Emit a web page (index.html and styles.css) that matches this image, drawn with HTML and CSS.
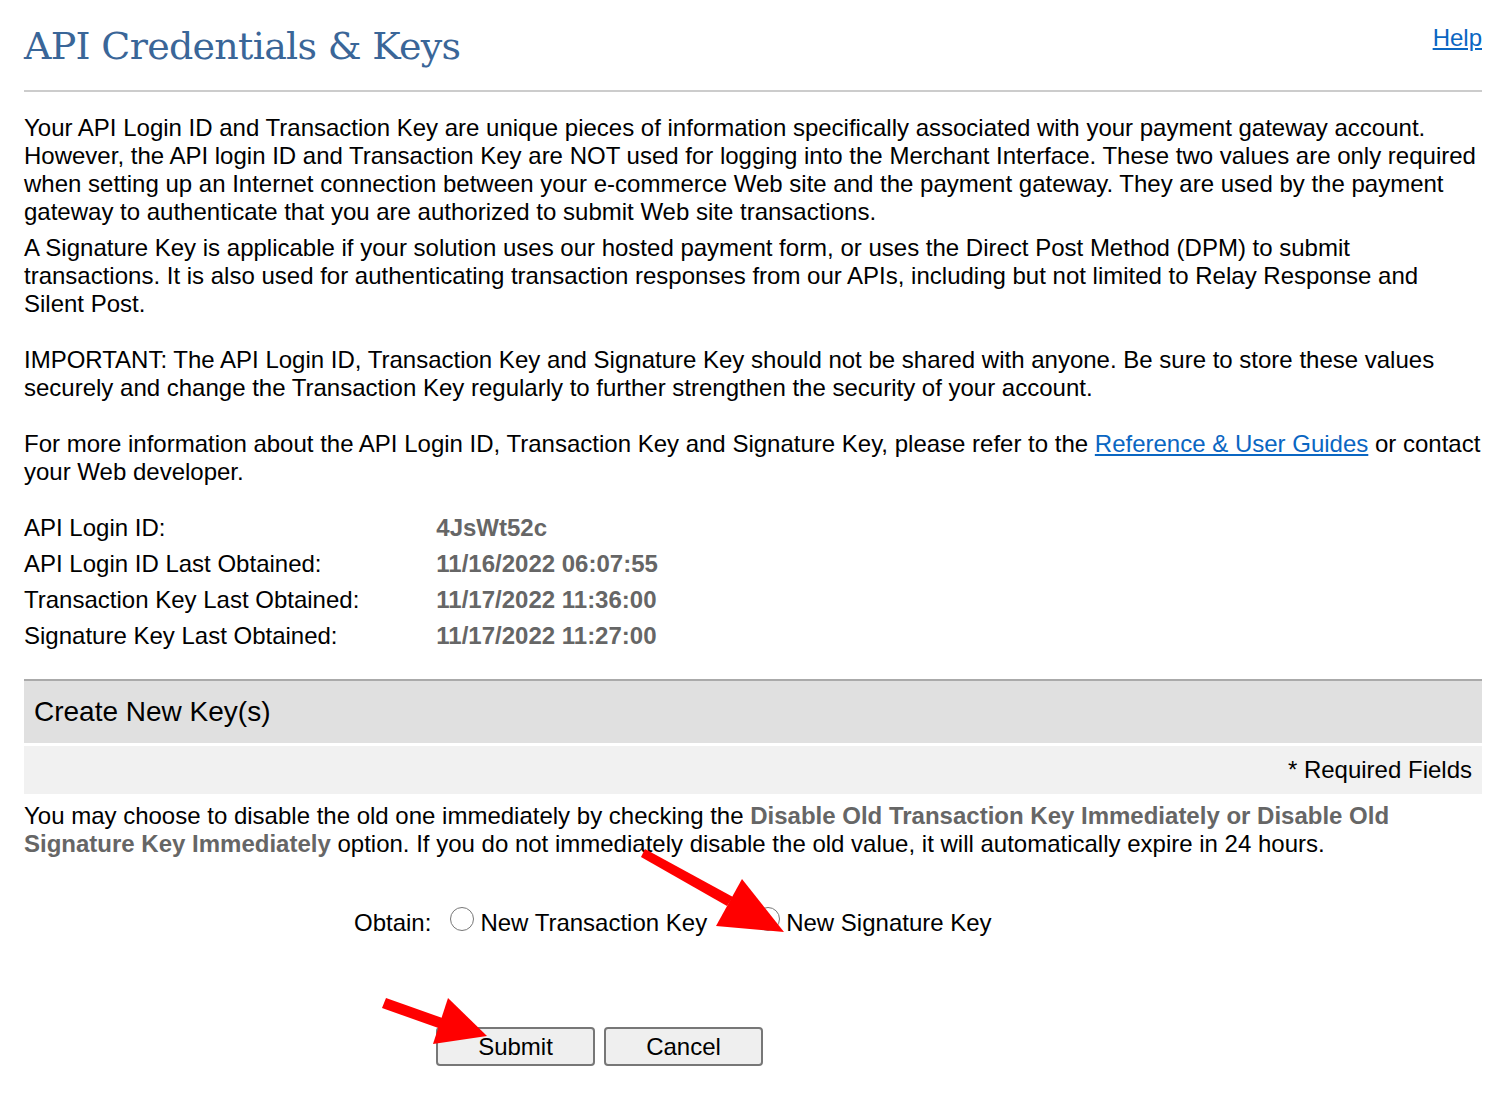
FILE: index.html
```html
<!DOCTYPE html>
<html>
<head>
	<meta name="viewport" content="width=device-width, initial-scale=1">
	<title>API Credentials &amp; Keys</title>
	<link rel="stylesheet" href="styles.css">
</head>
<body>
	<div class="page">
		<div class="header">
			<h1>API Credentials &amp; Keys</h1>
			<a class="help" href="#">Help</a>
		</div>

		<p class="first">Your API Login ID and Transaction Key are unique pieces of information specifically associated with your payment gateway account. However, the API login ID and Transaction Key are NOT used for logging into the Merchant Interface. These two values are only required when setting up an Internet connection between your e-commerce Web site and the payment gateway. They are used by the payment gateway to authenticate that you are authorized to submit Web site transactions.</p>
		<p>A Signature Key is applicable if your solution uses our hosted payment form, or uses the Direct Post Method (DPM) to submit transactions. It is also used for authenticating transaction responses from our APIs, including but not limited to Relay Response and Silent Post.</p>
		<p class="spaced">IMPORTANT: The API Login ID, Transaction Key and Signature Key should not be shared with anyone. Be sure to store these values securely and change the Transaction Key regularly to further strengthen the security of your account.</p>
		<p class="spaced">For more information about the API Login ID, Transaction Key and Signature Key, please refer to the <a href="#">Reference &amp; User Guides</a> or contact your Web developer.</p>

		<table class="info">
			<tr>
				<td>API Login ID:</td>
				<td class="value">4JsWt52c</td>
			</tr>
			<tr>
				<td>API Login ID Last Obtained:</td>
				<td class="value">11/16/2022 06:07:55</td>
			</tr>
			<tr>
				<td>Transaction Key Last Obtained:</td>
				<td class="value">11/17/2022 11:36:00</td>
			</tr>
			<tr>
				<td>Signature Key Last Obtained:</td>
				<td class="value">11/17/2022 11:27:00</td>
			</tr>
		</table>

		<div class="section-title">Create New Key(s)</div>
		<div class="required">* Required Fields</div>

		<p class="note">You may choose to disable the old one immediately by checking the <b>Disable Old Transaction Key Immediately or Disable Old Signature Key Immediately</b> option. If you do not immediately disable the old value, it will automatically expire in 24 hours.</p>

		<div class="obtain">
			<span class="obtain-label">Obtain:</span>
			<label><span class="radio"></span>New Transaction Key</label>
			<label><span class="radio"></span>New Signature Key</label>
		</div>

		<div class="buttons">
			<button>Submit</button>
			<button>Cancel</button>
		</div>
	</div>

	<svg class="arrows" width="1506" height="1104" viewBox="0 0 1506 1104">
		<polygon fill="#ff0000" points="641,857 645,849 733,897 727,906"/>
		<polygon fill="#ff0000" points="742,879 716,926 784,932"/>
		<polygon fill="#ff0000" points="382,1008 386,998 448,1020 444,1030"/>
		<polygon fill="#ff0000" points="448,998 433,1044 487,1036"/>
	</svg>
</body>
</html>
```

FILE: styles.css
```css
body {
	font-family: "Liberation Sans", Arial, sans-serif;
	font-size: 24px;
	line-height: 28px;
	color: #000;
	background-color: #fff;
	margin: 0;
	padding: 0;
}
.page {
	padding: 0 24px;
}
.header {
	display: flex;
	justify-content: space-between;
	align-items: flex-start;
	border-bottom: 2px solid #ccc;
	height: 90px;
}
h1 {
	font-family: "DejaVu Serif", Georgia, serif;
	font-weight: normal;
	font-size: 38px;
	line-height: 44px;
	color: #3a6698;
	margin: 24px 0 0 0;
	letter-spacing: -0.7px;
}
a {
	color: #0a66c2;
}
.help {
	margin-top: 24px;
}
p {
	margin: 8px 0 0 0;
}
p.first {
	margin-top: 22px;
}
p.spaced {
	margin-top: 28px;
}
table.info {
	border-collapse: collapse;
	margin-top: 24px;
}
table.info td {
	padding: 0;
	height: 36px;
	vertical-align: middle;
}
table.info td.value {
	padding-left: 77px;
	font-weight: bold;
	color: #666;
}
.section-title {
	margin-top: 25px;
	border-top: 2px solid #aaa;
	background-color: #e0e0e0;
	font-size: 28px;
	height: 62px;
	line-height: 62px;
	padding-left: 10px;
}
.required {
	margin-top: 3px;
	background-color: #f1f1f1;
	height: 48px;
	line-height: 48px;
	text-align: right;
	padding-right: 10px;
}
p.note {
	margin-top: 8px;
}
p.note b {
	color: #666;
}
.obtain {
	display: flex;
	align-items: center;
	margin: 43px 0 0 330px;
	height: 44px;
}
.obtain-label {
	margin-right: 19px;
}
.obtain label {
	display: flex;
	align-items: center;
	margin-right: 49px;
}
.radio {
	width: 24px;
	height: 24px;
	border: 1.5px solid #777;
	border-radius: 50%;
	box-sizing: border-box;
	margin-right: 6px;
	margin-top: -8px;
}
.buttons {
	display: flex;
	gap: 9px;
	margin: 82px 0 0 412px;
}
button {
	font-family: "Liberation Sans", Arial, sans-serif;
	font-size: 24px;
	width: 159px;
	height: 39px;
	padding: 0;
	background-color: #efefef;
	border: 2px solid #777;
	border-radius: 4px;
	color: #000;
}
.arrows {
	position: absolute;
	left: 0;
	top: 0;
	pointer-events: none;
}
```
